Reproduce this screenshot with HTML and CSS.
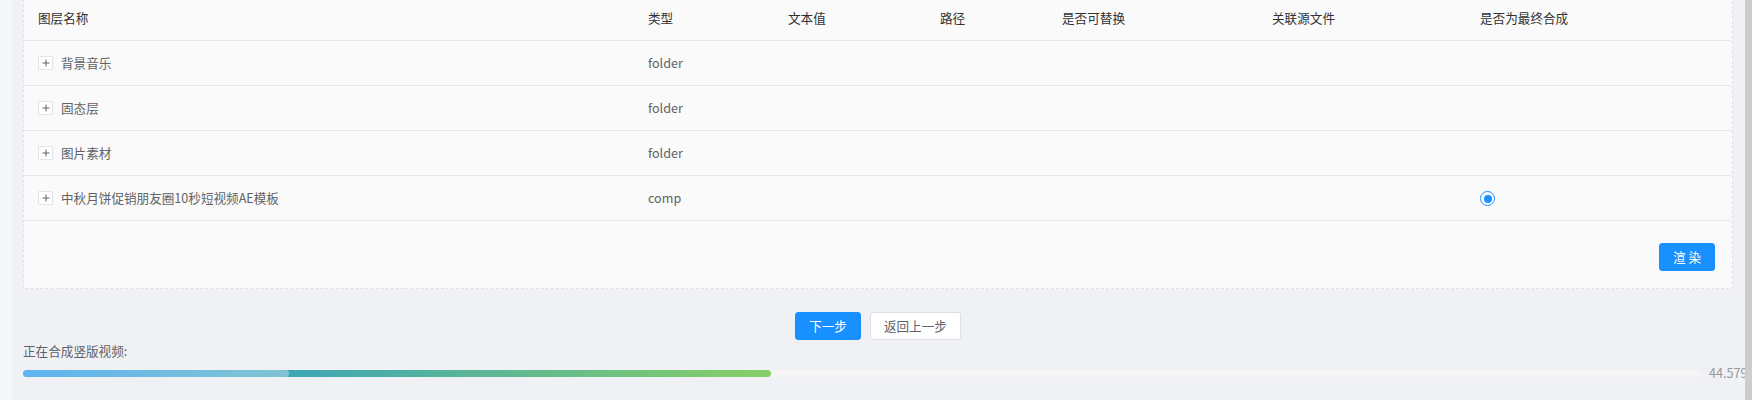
FILE: index.html
```html
<!DOCTYPE html>
<html lang="zh-CN">
<head>
<meta charset="utf-8">
<title>图层</title>
<link rel="stylesheet" href="styles.css">
</head>
<body>
<div class="page">
  <div class="side"></div>
  <main class="main">
    <section class="card">
      <div class="table">
        <div class="row head">
          <div class="cell">图层名称</div>
          <div class="cell">类型</div>
          <div class="cell">文本值</div>
          <div class="cell">路径</div>
          <div class="cell">是否可替换</div>
          <div class="cell">关联源文件</div>
          <div class="cell">是否为最终合成</div>
        </div>
        <div class="row">
          <div class="cell"><span class="expand"><svg viewBox="0 0 12 12" width="12" height="12"><path d="M2.5 6h7M6 2.5v7" stroke="#606266" stroke-width="1" fill="none"/></svg></span>背景音乐</div>
          <div class="cell">folder</div>
          <div class="cell"></div><div class="cell"></div><div class="cell"></div><div class="cell"></div><div class="cell"></div>
        </div>
        <div class="row">
          <div class="cell"><span class="expand"><svg viewBox="0 0 12 12" width="12" height="12"><path d="M2.5 6h7M6 2.5v7" stroke="#606266" stroke-width="1" fill="none"/></svg></span>固态层</div>
          <div class="cell">folder</div>
          <div class="cell"></div><div class="cell"></div><div class="cell"></div><div class="cell"></div><div class="cell"></div>
        </div>
        <div class="row">
          <div class="cell"><span class="expand"><svg viewBox="0 0 12 12" width="12" height="12"><path d="M2.5 6h7M6 2.5v7" stroke="#606266" stroke-width="1" fill="none"/></svg></span>图片素材</div>
          <div class="cell">folder</div>
          <div class="cell"></div><div class="cell"></div><div class="cell"></div><div class="cell"></div><div class="cell"></div>
        </div>
        <div class="row">
          <div class="cell"><span class="expand"><svg viewBox="0 0 12 12" width="12" height="12"><path d="M2.5 6h7M6 2.5v7" stroke="#606266" stroke-width="1" fill="none"/></svg></span>中秋月饼促销朋友圈10秒短视频AE模板</div>
          <div class="cell">comp</div>
          <div class="cell"></div><div class="cell"></div><div class="cell"></div><div class="cell"></div>
          <div class="cell"><span class="radio"><span class="radio-dot"></span></span></div>
        </div>
      </div>
      <div class="card-foot">
        <button class="btn primary">渲 染</button>
      </div>
    </section>

    <div class="steps">
      <button class="btn primary">下一步</button>
      <button class="btn default">返回上一步</button>
    </div>

    <div class="progress">
      <div class="progress-label">正在合成竖版视频:</div>
      <div class="progress-row">
        <div class="track">
          <div class="fill" style="width: 44.579%"><div class="shine"></div></div>
        </div>
        <div class="pct">44.579%</div>
      </div>
    </div>
  </main>
  <div class="scrollbar"></div>
</div>
</body>
</html>
```

FILE: styles.css
```css
* { box-sizing: border-box; }

html, body {
  margin: 0;
  padding: 0;
  height: 100%;
  overflow: hidden;
}

body {
  font-family: "Noto Sans CJK SC", "Noto Sans", sans-serif;
  font-size: 12.6px;
  color: #606266;
  background: #f0f1f5;
}

.page {
  display: flex;
  height: 400px;
}

.side {
  width: 12px;
  flex: none;
  background: #f5f6f9;
}

.main {
  flex: 1;
  min-width: 0;
  overflow: hidden;
  padding: 0 12px 0 11px;
  background: #f0f1f5;
}

.scrollbar {
  width: 7px;
  flex: none;
  background: #cdcdcd;
}

.card {
  margin-top: -6px;
  background: #fafafa;
  border: 1px dashed #e0e0e0;
  border-radius: 4px;
}

.row {
  display: grid;
  grid-template-columns: 610px 140px 152px 122px 210px 208px 1fr;
  height: 45px;
  border-bottom: 1px solid #e8e8e8;
}

.row.head {
  height: 46px;
  color: #303133;
}

.cell {
  display: flex;
  align-items: center;
  padding-left: 14px;
  line-height: 18px;
  white-space: nowrap;
}

.expand {
  width: 15px;
  height: 14px;
  flex: none;
  margin-right: 8px;
  background: #fff;
  border: 1px solid #e2e4ea;
  border-radius: 1px;
  display: flex;
  align-items: center;
  justify-content: center;
}

.expand svg {
  display: block;
  width: 12px;
  height: 12px;
}

.radio {
  width: 15px;
  height: 15px;
  border: 1px solid #1890ff;
  border-radius: 50%;
  display: flex;
  align-items: center;
  justify-content: center;
  background: #fff;
  margin-top: 1px;
}

.radio-dot {
  width: 8px;
  height: 8px;
  border-radius: 50%;
  background: #1890ff;
}

.card-foot {
  display: flex;
  justify-content: flex-end;
  padding: 22px 17px 17px;
}

.btn {
  font-family: "Noto Sans CJK SC", "Noto Sans", sans-serif;
  font-size: 12.6px;
  height: 28px;
  line-height: 1;
  padding: 0 13px;
  border-radius: 3px;
  border: 1px solid transparent;
  cursor: pointer;
  white-space: nowrap;
}

.btn.primary {
  background: #1890ff;
  border-color: #1890ff;
  color: #fff;
}

.btn.default {
  background: #fff;
  border-color: #dcdfe6;
  color: #606266;
}

.steps {
  display: flex;
  justify-content: center;
  gap: 9px;
  margin-top: 23px;
}

.progress-label {
  margin-top: 2px;
  line-height: 18px;
  color: #606266;
}

.progress-row {
  display: flex;
  align-items: center;
  margin-top: 6px;
}

.track {
  flex: 1;
  height: 7px;
  background: #f5f5f5;
  border-radius: 4px;
  overflow: hidden;
}

.fill {
  height: 100%;
  border-radius: 4px;
  background: linear-gradient(to right, #2f9fcc 0%, #3da6b7 35%, #87cf65 100%);
}

.shine {
  width: 35.6%;
  height: 100%;
  border-radius: 4px;
  background: linear-gradient(to right, #5eb3f1, #80c4d3);
}

.pct {
  width: 24px;
  flex: none;
  margin-left: 7px;
  white-space: nowrap;
  overflow: visible;
  color: #999;
  line-height: 14px;
}
```
